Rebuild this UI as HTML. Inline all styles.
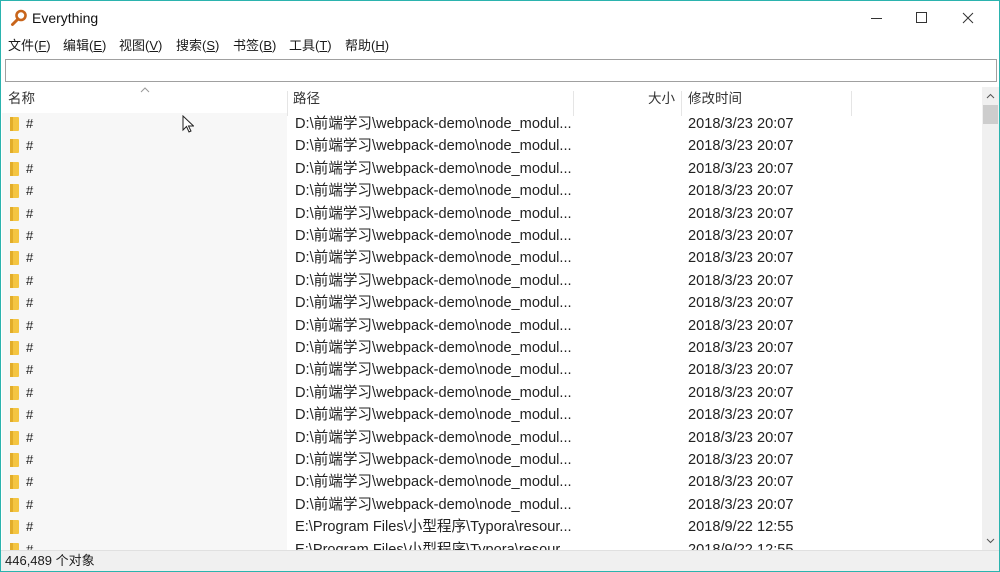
<!DOCTYPE html>
<html><head><meta charset="utf-8"><style>
*{margin:0;padding:0;box-sizing:border-box}
body{width:1000px;height:572px;overflow:hidden;background:#fff;font-family:"Liberation Sans","Noto Sans CJK SC",sans-serif;font-size:13px;color:#1a1a1a;position:relative}
.win{position:absolute;left:0;top:0;width:1000px;height:572px;border:1px solid #2bb3ae;overflow:hidden}
.abs{position:absolute}
span,div{line-height:16px}
.title{left:31px;top:9px;font-size:14px;color:#111}
.menu span{position:absolute;top:37px;font-size:13px}
.search{left:4px;top:58px;width:992px;height:23px;border:1px solid #a0a0a0;background:#fff}
.hdr{top:86px;height:25px;left:0;width:980px}
.hdr div{position:absolute;top:4px;color:#333;font-size:13.5px}
.sep{position:absolute;top:0;width:1px;height:25px;background:#e5e5e5}
.namebg{left:1px;top:112px;width:285px;height:437px;background:#f7f7f7}
.row{position:absolute;left:0;width:980px;height:22px}
.row .f{position:absolute;left:9px;top:4px;width:9px;height:14px;background:#f4c542;border-radius:1px}
.row .f:before{content:"";position:absolute;left:0;top:0;width:3px;height:14px;background:#e2ad2a}
.row span{font-size:14.6px;line-height:16px;height:16px;white-space:nowrap}
.row .n{position:absolute;left:25px;top:3px;font-size:13px}
.row .p{position:absolute;left:294px;top:3px;color:#222}
.row .d{position:absolute;left:687px;top:3px;color:#222}
.sb{left:981px;top:86px;width:17px;height:463px;background:#f0f0f0}
.status{left:0;top:549px;width:998px;height:22px;background:#f0f0f0;border-top:1px solid #e0e0e0}
</style></head><body><div class="win">
<svg class="abs" style="left:9px;top:8px" width="18" height="18" viewBox="0 0 18 18"><circle cx="11" cy="6.5" r="4.5" fill="none" stroke="#c8651b" stroke-width="2.6"/><path d="M8 10 L2.5 15.5" stroke="#c8651b" stroke-width="3" stroke-linecap="round"/></svg>
<div class="abs title">Everything</div>
<svg class="abs" style="left:860px;top:10px" width="120" height="14"><path d="M10 7.5h11" stroke="#333"/><path d="M55.5 1.5h10v10h-10z" fill="none" stroke="#333"/><path d="M102 2l10 10M112 2l-10 10" stroke="#333"/></svg>
<div class="menu"><span style="left:7px">文件(<u>F</u>)</span><span style="left:62px">编辑(<u>E</u>)</span><span style="left:118px">视图(<u>V</u>)</span><span style="left:175px">搜索(<u>S</u>)</span><span style="left:232px">书签(<u>B</u>)</span><span style="left:288px">工具(<u>T</u>)</span><span style="left:344px">帮助(<u>H</u>)</span></div>
<div class="abs search"></div>
<div class="abs hdr"><div style="left:7px">名称</div><svg class="abs" style="left:139px;top:0" width="10" height="6"><path d="M1 5l4-4 4 4" fill="none" stroke="#999"/></svg><div class="sep" style="left:286px"></div><div style="left:292px">路径</div><div class="sep" style="left:572px"></div><div style="left:647px">大小</div><div class="sep" style="left:680px"></div><div style="left:687px">修改时间</div><div class="sep" style="left:850px"></div></div>
<div class="abs namebg"></div>
<div id="rows"></div>
<svg class="abs" style="left:181px;top:114px" width="12" height="19"><path d="M1 1v14l3.5-3.5 2.5 5.5 2-1-2.5-5h5z" fill="#fff" stroke="#222"/></svg>
<div class="abs sb"><svg class="abs" style="left:4px;top:6px" width="9" height="6"><path d="M1 5l3.5-3.5 3.5 3.5" fill="none" stroke="#555"/></svg><div class="abs" style="left:1px;top:18px;width:15px;height:19px;background:#cdcdcd"></div><svg class="abs" style="left:4px;top:451px" width="9" height="6"><path d="M1 1l3.5 3.5 3.5-3.5" fill="none" stroke="#555"/></svg></div>
<div class="abs status"><span class="abs" style="left:4px;top:2px">446,489 个对象</span></div>
</div>
<script>
var h="",i;for(i=0;i<20;i++){var y=112+i*22.4;var e=i>=18;h+='<div class="row" style="top:'+y+'px"><div class="f"></div><span class="n">#</span><span class="p">'+(e?'E:\\Program Files\\小型程序\\Typora\\resour...':'D:\\前端学习\\webpack-demo\\node_modul...')+'</span><span class="d">'+(e?'2018/9/22 12:55':'2018/3/23 20:07')+'</span></div>';}
document.getElementById("rows").innerHTML=h;
</script>
</body></html>
